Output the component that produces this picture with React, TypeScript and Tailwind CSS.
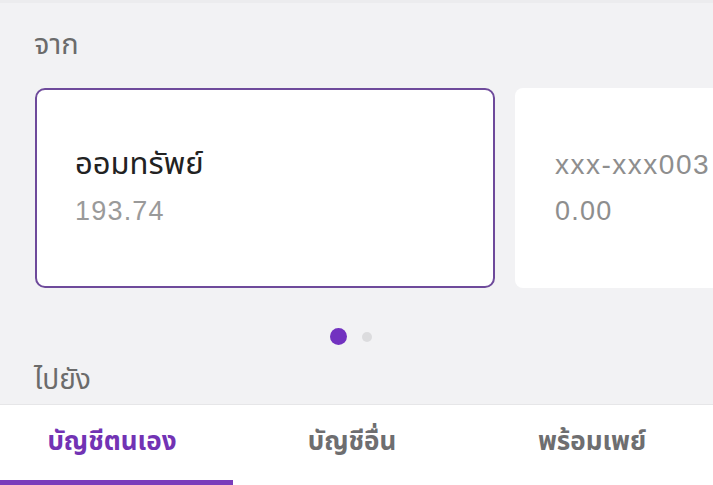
import React from "react";

const num = { fontFamily: '"Liberation Sans", sans-serif' };

export default function App() {
  return (
    <div
      className="w-[713px] h-[485px] overflow-hidden bg-[#f2f2f4] flex flex-col"
      style={{ fontFamily: '"Noto Sans Thai", "Noto Sans", "Liberation Sans", sans-serif' }}
    >
      <div className="h-[3px] bg-[#ececee]" />
      <div className="flex-1 flex flex-col">
        <div className="pl-[34px] pt-[25px] text-[29px] leading-[34px] text-[#6b6b6b]">จาก</div>
        <div className="flex gap-[20px] pl-[35px] mt-[26px]">
          <div className="shrink-0 w-[460px] h-[200px] bg-white rounded-[10px] border-2 border-[#6e4a9b] flex flex-col justify-center pl-[38px] pb-[2px]">
            <div className="text-[31px] leading-[40px] text-[#222]">ออมทรัพย์</div>
            <div className="text-[27px] leading-[38px] tracking-[1.2px] text-[#9a9a9a] mt-[7px]" style={num}>193.74</div>
          </div>
          <div className="shrink-0 w-[460px] h-[200px] bg-white rounded-[8px] flex flex-col justify-center pl-[40px] pb-[2px]">
            <div className="text-[28px] leading-[40px] tracking-[1.5px] text-[#8e8e8e]" style={num}>xxx-xxx003</div>
            <div className="text-[27px] leading-[38px] tracking-[1.2px] text-[#8e8e8e] mt-[7px]" style={num}>0.00</div>
          </div>
        </div>
        <div className="flex items-center gap-[15px] pl-[330px] mt-[40px]">
          <div className="w-[17px] h-[17px] rounded-full bg-[#7232c0]" />
          <div className="w-[10px] h-[10px] rounded-full bg-[#dcdcde]" />
        </div>
        <div className="pl-[34px] mt-[19px] text-[28px] leading-[34px] text-[#6b6b6b]">ไปยัง</div>
      </div>
      <div className="h-[81px] bg-white border-t border-[#e6e6e8] flex flex-col">
        <div className="flex-1 flex">
          <div className="w-[224px] flex items-center justify-center text-[26px] font-bold text-[#7233b4]">บัญชีตนเอง</div>
          <div className="w-[256px] flex items-center justify-center text-[26px] font-bold text-[#6e6e70]">บัญชีอื่น</div>
          <div className="w-[224px] flex items-center justify-center text-[26px] font-bold text-[#6e6e70]">พร้อมเพย์</div>
        </div>
        <div className="h-[5px] w-[233px] bg-[#7a3dbb]" />
      </div>
    </div>
  );
}
